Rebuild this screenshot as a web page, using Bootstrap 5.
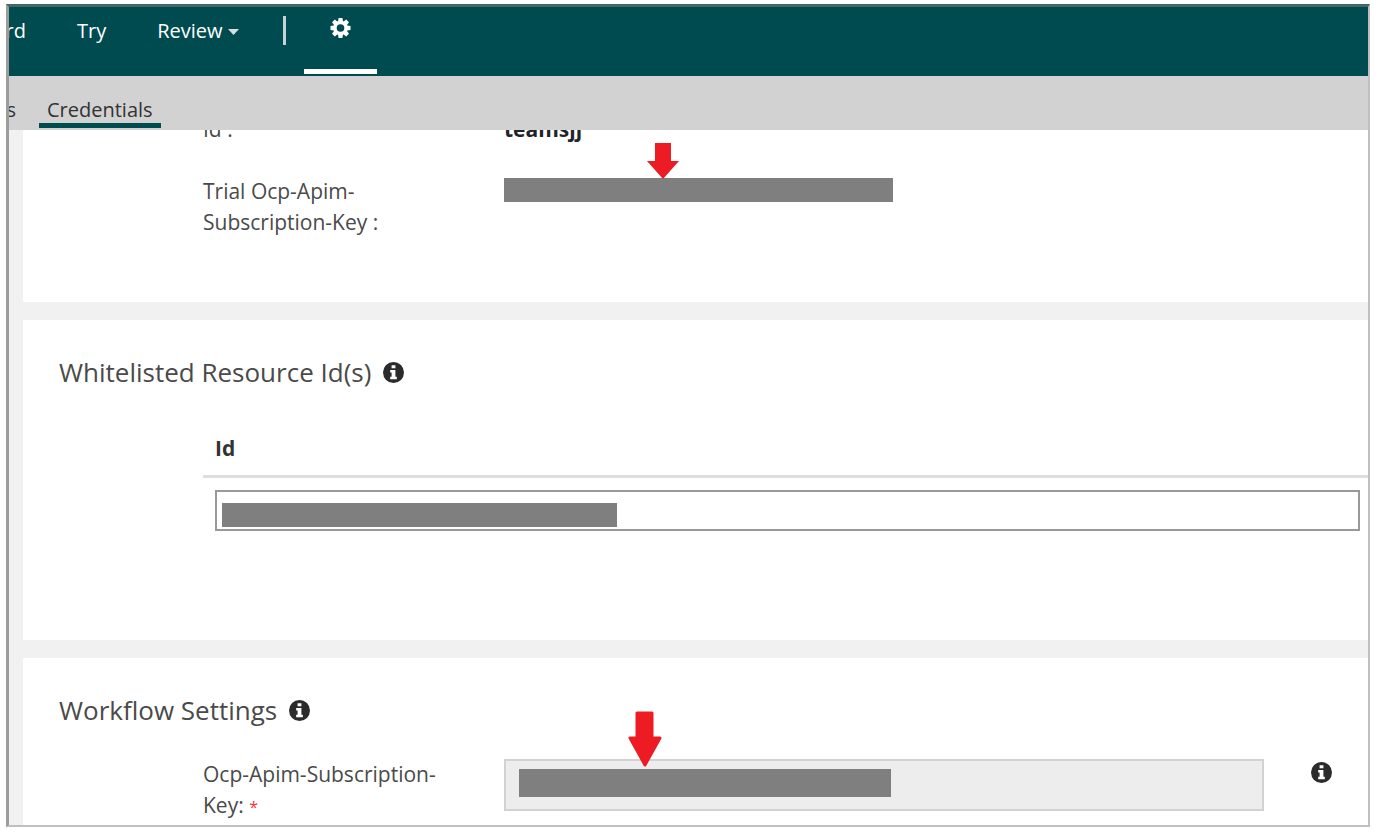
<!DOCTYPE html>
<html lang="en">
<head>
<meta charset="utf-8">
<meta name="viewport" content="width=device-width, initial-scale=1">
<title>Credentials</title>
<link href="https://cdn.jsdelivr.net/npm/bootstrap@5.3.0/dist/css/bootstrap.min.css" rel="stylesheet">
<style>
  :root { --teal: #004b50; --ink: #4a4a4a; --mask: #7f7f7f; }
  body { font-family: "Open Sans", "Noto Sans", sans-serif; font-size: 21px; line-height: 31px; color: var(--ink); background: #fff; }
  .page { padding: 4px 8px 6px 6px; }
  .frame { border: 2px solid #bfbfbf; border-top: 3px solid #43686b; border-left: 3px solid #9c9c9c; }
  .topbar { background: var(--teal); height: 69px; }
  .topbar .nav-link, .subbar .nav-link { padding: 0; white-space: nowrap; font-size: 20px; }
  .topbar .nav-link { color: #fff; border-bottom: 5px solid transparent; padding-top: 8px; height: 67px; }
  .topbar .nav-link.active { border-color: #fff; width: 73px; padding-top: 10px; }
  .topbar .spaced { margin-left: 51px; }
  .clip-start { width: 17px; display: flex; justify-content: flex-end; overflow: hidden; }
  .divider { width: 3px; height: 29px; background: #c5d3d4; margin: 9px 18px 0 44px; }
  .caret { width: 11px; height: 6px; margin: 14px 0 0 5px; }
  .subbar { background: #d2d2d2; height: 54px; padding-top: 18px; }
  .subbar .nav-link { color: #333; }
  .subbar .nav-link.active { border-bottom: 5px solid var(--teal); padding: 0 8px; height: 34px; }
  .subbar .clip-start { width: 7px; margin-right: 23px; }
  .content { background: #f1f1f1; padding-left: 14px; }
  .panel { background: #fff; padding: 35px 0 36px 36px; margin-bottom: 18px; }
  .panel-scrolled { margin-top: -51px; padding-bottom: 64px; }
  .panel-title { font-size: 26px; line-height: 34px; font-weight: 400; gap: 12px; }
  .info { width: 21px; height: 21px; }
  .field { padding-left: 144px; }
  .field-label { width: 301px; padding-right: 40px; }
  .field + .field { margin-top: 31px; }
  .panel-title + .field { margin-top: 32px; }
  .field-info { margin: 3px 36px 0 47px; }
  .mask { background: var(--mask); height: 24px; }
  .trial-key { margin-top: 2px; width: 389px; }
  .arrow { position: absolute; }
  .trial-key .arrow { left: 143px; top: -35px; }
  .key-field .arrow { left: 124px; top: -48px; }
  .key-field .mask { position: absolute; left: 15px; top: 10px; width: 372px; height: 28px; }
  .id-field .mask { position: absolute; left: 7px; top: 13px; width: 395px; }
  .resource-table { margin: 44px 0 0 144px; }
  .resource-table th { color: #333; padding: 0 12px 11px; border-bottom: 3px solid #dedede; }
  .resource-table td { padding: 12px 8px 73px 12px; }
  .form-control { border-radius: 0; padding: 0 8px; font-size: 20px; }
  .id-input, .id-input:focus { border: 2px solid #999; height: 41px; }
  .key-input:disabled { border: 2px solid #d2d2d2; background: #ededed; height: 52px; }
  .req { color: #f33; font-size: 16px; }
</style>
</head>
<body>
<svg class="d-none">
  <symbol id="info" viewBox="0 0 22 22"><circle cx="11" cy="11" r="11" fill="#2b2b2b"/><path fill="#fff" d="M9 3.500h4v3H9zM7.500 8.500H13v7h1.500V18h-7v-2.500H9V11H7.500z"/></symbol>
</svg>
<div class="page vh-100">
<div class="frame h-100 d-flex flex-column overflow-hidden">
  <header class="topbar flex-shrink-0">
    <nav class="d-flex align-items-start" aria-label="Main">
      <a class="nav-link clip-start" href="#">Dashboard</a>
      <a class="nav-link spaced" href="#">Try</a>
      <a class="nav-link spaced d-flex" href="#">Review<svg class="caret" viewBox="0 0 11 6" fill="#d5dfe0"><path d="M0 0h11L5.500 6z"/></svg></a>
      <span class="divider"></span>
      <a class="nav-link active d-flex justify-content-center" href="#" aria-label="Settings">
        <svg width="21" height="22" viewBox="0 0 22 22"><g fill="#fff"><circle cx="11" cy="11" r="7.500"/><path id="tooth" d="M9 0.500h4l.8 5H8.200z"/><use href="#tooth" transform="rotate(45 11 11)"/><use href="#tooth" transform="rotate(90 11 11)"/><use href="#tooth" transform="rotate(135 11 11)"/><use href="#tooth" transform="rotate(180 11 11)"/><use href="#tooth" transform="rotate(225 11 11)"/><use href="#tooth" transform="rotate(270 11 11)"/><use href="#tooth" transform="rotate(315 11 11)"/></g><circle cx="11" cy="11" r="4" fill="#004b50"/></svg>
      </a>
    </nav>
  </header>
  <nav class="subbar d-flex flex-shrink-0" aria-label="Settings sections">
    <a class="nav-link clip-start" href="#">Users</a>
    <a class="nav-link active" href="#">Credentials</a>
  </nav>
  <main class="content flex-grow-1 overflow-hidden">
    <section class="panel panel-scrolled">
      <div class="field d-flex"><div class="field-label">Id :</div><strong class="text-dark">teamsjj</strong></div>
      <div class="field d-flex">
        <div class="field-label">Trial Ocp-Apim-Subscription-Key :</div>
        <div class="trial-key position-relative">
          <div class="mask"></div>
          <svg class="arrow" width="32" height="36" viewBox="0 0 32 36"><path fill="#ed1c24" d="M8 0h16v18h8L16 36 0 18h8z"/></svg>
        </div>
      </div>
    </section>
    <section class="panel">
      <h2 class="panel-title d-flex align-items-center mb-0">Whitelisted Resource Id(s)
        <svg class="info" role="img" aria-label="Info"><use href="#info"/></svg></h2>
      <div class="resource-table">
        <table class="w-100">
          <thead><tr><th scope="col">Id</th></tr></thead>
          <tbody><tr><td><div class="id-field position-relative"><input class="form-control id-input" type="text" aria-label="Resource id"><div class="mask"></div></div></td></tr></tbody>
        </table>
      </div>
    </section>
    <section class="panel">
      <h2 class="panel-title d-flex align-items-center mb-0">Workflow Settings
        <svg class="info" role="img" aria-label="Info"><use href="#info"/></svg></h2>
      <div class="field d-flex">
        <label class="field-label flex-shrink-0" for="key">Ocp-Apim-Subscription-Key: <span class="req">*</span></label>
        <div class="key-field position-relative flex-grow-1">
          <input class="form-control key-input" id="key" type="text" disabled>
          <div class="mask"></div>
          <svg class="arrow" width="34" height="56" viewBox="0 0 34 56"><path fill="#ed1c24" stroke="#ed1c24" stroke-width="3" stroke-linejoin="round" d="M9 2h15v25h8L17 54 2 27h7z"/></svg>
        </div>
        <svg class="info field-info flex-shrink-0" role="img" aria-label="Info"><use href="#info"/></svg>
      </div>
    </section>
  </main>
</div>
</div>
<script src="https://cdn.jsdelivr.net/npm/bootstrap@5.3.0/dist/js/bootstrap.bundle.min.js"></script>
</body>
</html>
